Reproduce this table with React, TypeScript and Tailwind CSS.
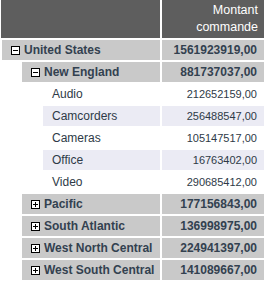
const rows = [
  { label: 'United States', value: '1561923919,00', level: 0, kind: 'open' },
  { label: 'New England', value: '881737037,00', level: 1, kind: 'open' },
  { label: 'Audio', value: '212652159,00', level: 2, kind: 'leaf' },
  { label: 'Camcorders', value: '256488547,00', level: 2, kind: 'leaf', alt: true },
  { label: 'Cameras', value: '105147517,00', level: 2, kind: 'leaf' },
  { label: 'Office', value: '16763402,00', level: 2, kind: 'leaf', alt: true },
  { label: 'Video', value: '290685412,00', level: 2, kind: 'leaf' },
  { label: 'Pacific', value: '177156843,00', level: 1, kind: 'closed' },
  { label: 'South Atlantic', value: '136998975,00', level: 1, kind: 'closed' },
  { label: 'West North Central', value: '224941397,00', level: 1, kind: 'closed' },
  { label: 'West South Central', value: '141089667,00', level: 1, kind: 'closed' },
]

function Toggle({ open }: { open: boolean }) {
  return (
    <svg width="9" height="9" viewBox="0 0 9 9" className="shrink-0">
      <rect x="0.5" y="0.5" width="8" height="8" fill="#fff" stroke="#000" />
      <path d="M2 4.5h5" stroke="#000" />
      {!open && <path d="M4.5 2v5" stroke="#000" />}
    </svg>
  )
}

export default function App() {
  return (
    <div className="w-[269px] h-[286px] bg-white pl-px" style={{ fontFamily: '"Liberation Sans", Arial, sans-serif' }}>
      <div className="grid grid-cols-[159px_102px] gap-[2px]">
        <div className="h-[38px] bg-[#5e5e5e]" />
        <div className="h-[38px] bg-[#5e5e5e] flex flex-col items-end justify-center pr-[6px] text-white text-[12.5px] leading-[17px]">
          <span>Montant</span>
          <span>commande</span>
        </div>

        {rows.map((r) => {
          const group = r.kind !== 'leaf'
          const bg = group ? 'bg-[#c9c9c9]' : r.alt ? 'bg-[#ebebf4]' : 'bg-white'
          const indent = r.level === 0 ? 'ml-px' : r.level === 1 ? 'ml-[21px]' : 'ml-[42px]'
          return (
            <div key={r.label} className="contents">
              <div className={`h-[20px] ${indent} ${bg} flex items-center overflow-hidden whitespace-nowrap`}>
                {group ? (
                  <div className="flex items-center gap-[4px] pl-[9px] text-[12px] font-bold text-[#334150]">
                    <Toggle open={r.kind === 'open'} />
                    <span>{r.label}</span>
                  </div>
                ) : (
                  <span className="pl-[9px] text-[12px] text-[#2e3a47]">{r.label}</span>
                )}
              </div>
              <div
                className={`h-[20px] ${bg} flex items-center justify-end pr-[7px] ${
                  group ? 'text-[12px] font-bold text-[#334150]' : 'text-[11px] text-[#2e3a47]'
                }`}
              >
                {r.value}
              </div>
            </div>
          )
        })}
      </div>
    </div>
  )
}
